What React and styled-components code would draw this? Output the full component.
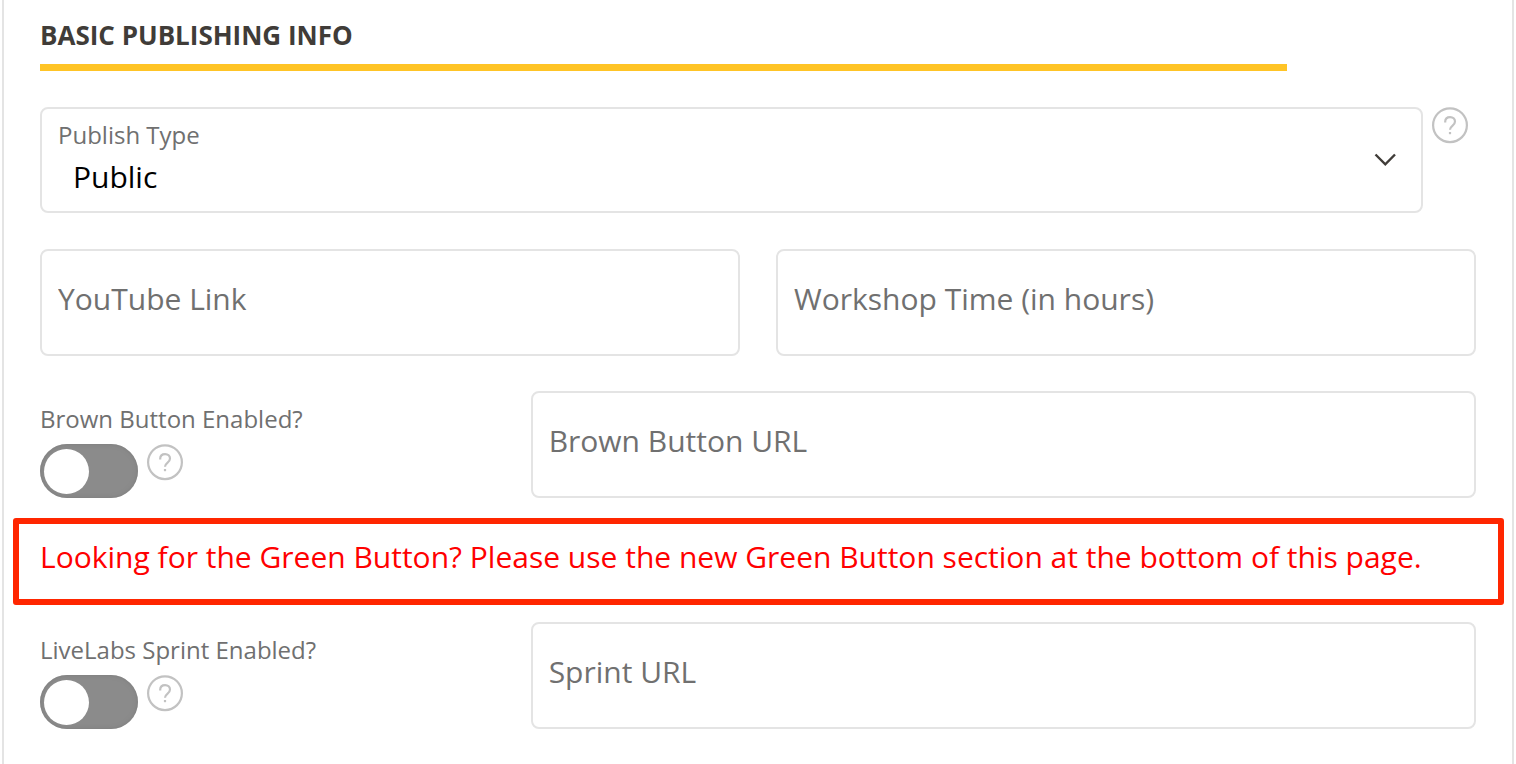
import React from "react";
import styled, { createGlobalStyle } from "styled-components";

const GlobalStyle = createGlobalStyle`
  *, *::before { box-sizing: border-box; }
  body {
    margin: 0;
    background: #fff;
    font-family: "Open Sans", "Noto Sans", sans-serif;
  }
`;

const Panel = styled.main`
  min-height: 100vh;
  margin: 0 2px;
  padding: 16px 36px 35px;
  border: solid #e4e4e4;
  border-width: 0 2px;
`;

const Heading = styled.h2`
  margin: 0 189px 36px 0;
  padding-bottom: 10px;
  border-bottom: 7px solid #ffc426;
  color: #403c38;
  font-size: 26px;
  line-height: 38px;
  font-weight: 700;
`;

const Row = styled.div`
  display: grid;
  grid-template-columns: repeat(12, 1fr);
  column-gap: 36px;
  margin-bottom: ${(p) => (p.$tight ? 0 : 35)}px;
`;

const Cell = styled.div`
  grid-column: span ${(p) => p.$span};
  min-width: 0;
`;

const SelectLine = styled(Cell)`
  display: flex;
  align-items: flex-start;
  gap: 9px;
  padding: 0 8px 1px 0;
`;

const SelectBox = styled.div`
  position: relative;
  flex: 1;
  height: 106px;
  padding: 10px 0 0;
  border: 2px solid #e4e4e4;
  border-radius: 8px;
`;

const FieldLabel = styled.label`
  display: block;
  padding-left: ${(p) => (p.$inset ? 16 : 0)}px;
  color: #707070;
  font-size: 24px;
  line-height: 32px;
`;

const Select = styled.select`
  appearance: none;
  display: block;
  width: 100%;
  height: 50px;
  padding: 0 64px 0 31px;
  border: 0;
  background: transparent;
  color: #000;
  font: inherit;
  font-size: 30px;
`;

const Chevron = styled.svg`
  position: absolute;
  top: 44px;
  right: 25px;
  width: 22px;
  height: 14px;
  pointer-events: none;
`;

const TextInput = styled.input`
  display: block;
  width: 100%;
  height: 107px;
  padding: 0 16px 9px;
  border: 2px solid #e4e4e4;
  border-radius: 8px;
  background: #fff;
  color: #000;
  font: inherit;
  font-size: 30px;
  &::placeholder { color: #707070; opacity: 1; }
`;

const HelpButton = styled.button`
  display: block;
  flex: none;
  width: 36px;
  height: 38px;
  padding: 0;
  border: 0;
  background: transparent;
  cursor: pointer;
  svg { display: block; }
`;

const ToggleCell = styled(Cell)`
  padding-top: 12px;
`;

const ToggleLine = styled.div`
  display: flex;
  align-items: flex-start;
  gap: 9px;
  margin-top: 9px;
`;

const Switch = styled.input`
  appearance: none;
  display: flex;
  align-items: center;
  width: 98px;
  height: 54px;
  margin: 0;
  padding: 0 4px;
  border-radius: 27px;
  background: #8b8b8b;
  box-shadow: inset 0 0 4px #7c7c7c;
  cursor: pointer;
  &::before {
    content: "";
    width: 45px;
    height: 45px;
    border-radius: 50%;
    background: #fff;
  }
  &:checked { justify-content: flex-end; background: #4b7a3f; }
`;

const Notice = styled.p`
  margin: 20px -28px 17px -27px;
  height: 87px;
  padding: 11px 21px;
  border: 6px solid #ff2600;
  border-radius: 3px;
  color: #f00;
  font-size: 30px;
  line-height: 44px;
  white-space: nowrap;
`;

function Help({ topic }) {
  return (
    <HelpButton type="button" aria-label={`Help: ${topic}`}>
      <svg width="36" height="38" viewBox="0 0 36 38" fill="none" stroke="#c2c2c2" strokeWidth="2.2">
        <circle cx="18" cy="18.2" r="16.9" />
        <path d="M13.200 15.500v-.8c0-2.800 2-4.600 4.900-4.600s4.900 1.900 4.900 4.500c0 2-1 3-2.600 4.200-1.600 1.200-2.400 2.100-2.400 4" />
        <path d="M18 25v2.200" />
      </svg>
    </HelpButton>
  );
}

function Toggle({ id, label }) {
  return (
    <ToggleCell $span={4}>
      <FieldLabel htmlFor={id}>{label}</FieldLabel>
      <ToggleLine>
        <Switch id={id} type="checkbox" role="switch" />
        <Help topic={label} />
      </ToggleLine>
    </ToggleCell>
  );
}

function Field({ span, label }) {
  return (
    <Cell $span={span}>
      <TextInput type="text" aria-label={label} placeholder={label} />
    </Cell>
  );
}

export default function App() {
  return (
    <>
      <GlobalStyle />
      <Panel>
        <Heading>BASIC PUBLISHING INFO</Heading>
        <Row>
          <SelectLine $span={12}>
            <SelectBox>
              <FieldLabel $inset htmlFor="publish-type">Publish Type</FieldLabel>
              <Select id="publish-type" defaultValue="Public">
                <option>Public</option>
              </Select>
              <Chevron viewBox="0 0 22 14" fill="none" stroke="#403c38" strokeWidth="2.4" aria-hidden="true">
                <path d="M1.500 1.500 11.300 11.300 21 1.500" />
              </Chevron>
            </SelectBox>
            <Help topic="Publish Type" />
          </SelectLine>
        </Row>
        <Row>
          <Field span={6} label="YouTube Link" />
          <Field span={6} label="Workshop Time (in hours)" />
        </Row>
        <Row $tight>
          <Toggle id="brown-button" label="Brown Button Enabled?" />
          <Field span={8} label="Brown Button URL" />
        </Row>
        <Notice>Looking for the Green Button? Please use the new Green Button section at the bottom of this page.</Notice>
        <Row $tight>
          <Toggle id="sprint" label="LiveLabs Sprint Enabled?" />
          <Field span={8} label="Sprint URL" />
        </Row>
      </Panel>
    </>
  );
}
